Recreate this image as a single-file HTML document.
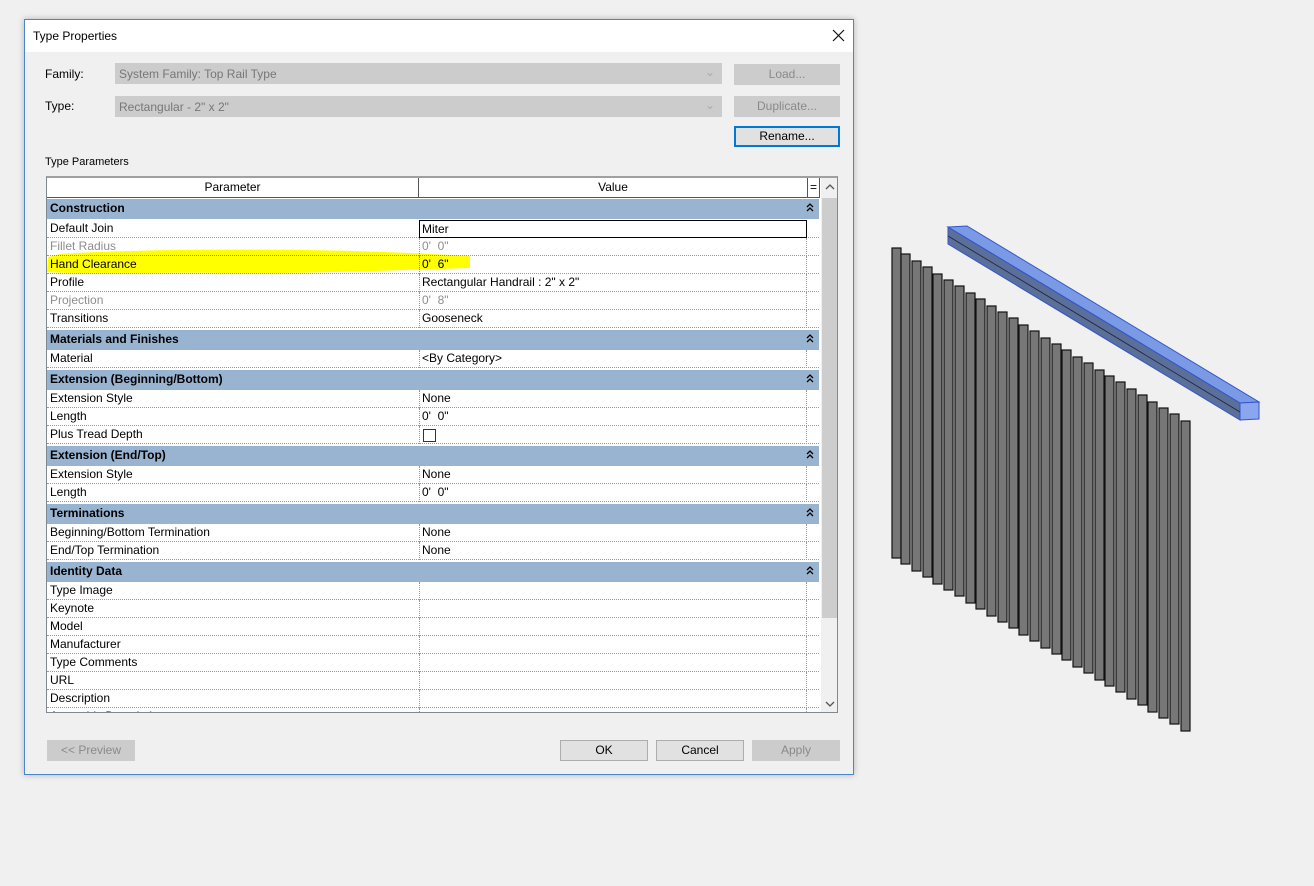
<!DOCTYPE html>
<html><head><meta charset="utf-8">
<style>
*{box-sizing:border-box;margin:0;padding:0}
body{width:1314px;height:886px;background:#f0f0f0;position:relative;overflow:hidden;font-family:"Liberation Sans",sans-serif;font-size:12px;color:#000}
.dlg{position:absolute;left:24px;top:19px;width:830px;height:756px;background:#f0f0f0;border:1px solid #4a86c8;box-shadow:0 0 6px rgba(0,0,0,.25)}
.title{position:absolute;left:0;top:0;width:828px;height:32px;background:#fff}
.abs{position:absolute}
.combo{position:absolute;background:#ccc;border:1px solid #ccc;color:#777;padding:3px 0 0 3px;height:21px}
.btn{position:absolute;background:#cccccc;border:1px solid #cccccc;color:#8a8a8a;text-align:center;line-height:19px;height:21px}
.btn.on{background:#e1e1e1;border:1px solid #adadad;color:#000}
.tbl{position:absolute;left:46px;top:176px;width:792px;height:537px;border:1px solid #828790;border-top:2px solid #a0a0a0;background:#fff;overflow:hidden}
.row{position:absolute;left:0;width:772px;height:18px;border-bottom:1px dotted #999;background:#fff}
.row .p{position:absolute;left:3px;top:1px}
.row .v{position:absolute;left:372px;top:0;width:388px;height:18px;border-left:1px dotted #999;border-right:1px dotted #999;padding:1px 0 0 2px}
.grp{position:absolute;left:0;width:772px;height:20px;background:#99b4d1;font-weight:bold;padding:2px 0 0 3px}
.grp .c{position:absolute;right:5px;top:3px}
.g{color:#8d8d8d}
</style></head><body>
<div class="dlg">
 <div class="title"><span class="abs" style="left:8px;top:9px">Type Properties</span>
  <svg class="abs" style="left:807px;top:9px" width="14" height="14"><path d="M1 1L12 12M12 1L1 12" stroke="#111" stroke-width="1.2"/></svg></div>
 <span class="abs" style="left:20px;top:47px">Family:</span>
 <span class="abs" style="left:20px;top:79px">Type:</span>
 <div class="combo" style="left:90px;top:43px;width:607px">System Family: Top Rail Type<span class="abs" style="right:6px;top:1px;color:#aaa">&#8964;</span></div>
 <div class="combo" style="left:90px;top:76px;width:607px">Rectangular - 2" x 2"<span class="abs" style="right:6px;top:1px;color:#aaa">&#8964;</span></div>
 <div class="btn" style="left:709px;top:44px;width:106px">Load...</div>
 <div class="btn" style="left:709px;top:76px;width:106px">Duplicate...</div>
 <div class="btn on" style="left:709px;top:106px;width:106px;border:2px solid #0078d7;line-height:17px">Rename...</div>
 <span class="abs" style="left:20px;top:136px;font-size:11px">Type Parameters</span>
 <div class="btn" style="left:22px;top:720px;width:88px">&lt;&lt; Preview</div>
 <div class="btn on" style="left:535px;top:720px;width:88px">OK</div>
 <div class="btn on" style="left:631px;top:720px;width:88px">Cancel</div>
 <div class="btn" style="left:727px;top:720px;width:88px">Apply</div>
</div>

<div class="tbl">
 <div class="abs" style="left:0;top:0;width:372px;height:20px;border-right:1px solid #555;border-bottom:1px solid #555;text-align:center;line-height:19px;background:#fff">Parameter</div>
 <div class="abs" style="left:372px;top:0;width:389px;height:20px;border-right:1px solid #555;border-bottom:1px solid #555;text-align:center;line-height:19px;background:#fff">Value</div>
 <div class="abs" style="left:761px;top:0;width:12px;height:20px;border-bottom:1px solid #555;border-right:1px solid #555;text-align:center;line-height:19px">=</div>
 <div class="abs" style="left:774px;top:0;width:17px;height:537px;background:#f0f0f0"></div>
 <div class="abs" style="left:775px;top:20px;width:15px;height:420px;background:#cdcdcd"></div>
 <svg class="abs" style="left:778px;top:5px" width="10" height="8"><path d="M1 6L5 2L9 6" stroke="#555" fill="none" stroke-width="1.3"/></svg>
 <svg class="abs" style="left:778px;top:522px" width="10" height="8"><path d="M1 2L5 6L9 2" stroke="#555" fill="none" stroke-width="1.3"/></svg>

 <div class="grp" style="top:21px">Construction<svg class="c" width="8" height="11"><path d="M1 5L4 2L7 5M1 9L4 6L7 9" stroke="#000" fill="none" stroke-width="1.3"/></svg></div>
 <div class="row" style="top:42px"><span class="p">Default Join</span><div class="v" style="border:1px solid #000;border-right:1px solid #000">Miter</div></div>
 <div class="row g" style="top:60px"><span class="p">Fillet Radius</span><div class="v">0'&nbsp; 0"</div></div>
 <div class="row" style="top:78px"><span class="p">Hand Clearance</span><div class="v">0'&nbsp; 6"</div></div>
 <div class="row" style="top:96px"><span class="p">Profile</span><div class="v">Rectangular Handrail : 2" x 2"</div></div>
 <div class="row g" style="top:114px"><span class="p">Projection</span><div class="v">0'&nbsp; 8"</div></div>
 <div class="row" style="top:132px"><span class="p">Transitions</span><div class="v">Gooseneck</div></div>
 <div class="grp" style="top:152px">Materials and Finishes<svg class="c" width="8" height="11"><path d="M1 5L4 2L7 5M1 9L4 6L7 9" stroke="#000" fill="none" stroke-width="1.3"/></svg></div>
 <div class="row" style="top:172px"><span class="p">Material</span><div class="v">&lt;By Category&gt;</div></div>
 <div class="grp" style="top:192px">Extension (Beginning/Bottom)<svg class="c" width="8" height="11"><path d="M1 5L4 2L7 5M1 9L4 6L7 9" stroke="#000" fill="none" stroke-width="1.3"/></svg></div>
 <div class="row" style="top:212px"><span class="p">Extension Style</span><div class="v">None</div></div>
 <div class="row" style="top:230px"><span class="p">Length</span><div class="v">0'&nbsp; 0"</div></div>
 <div class="row" style="top:248px"><span class="p">Plus Tread Depth</span><div class="v"><span style="display:inline-block;width:13px;height:13px;border:1px solid #333;margin:2px 0 0 1px"></span></div></div>
 <div class="grp" style="top:268px">Extension (End/Top)<svg class="c" width="8" height="11"><path d="M1 5L4 2L7 5M1 9L4 6L7 9" stroke="#000" fill="none" stroke-width="1.3"/></svg></div>
 <div class="row" style="top:288px"><span class="p">Extension Style</span><div class="v">None</div></div>
 <div class="row" style="top:306px"><span class="p">Length</span><div class="v">0'&nbsp; 0"</div></div>
 <div class="grp" style="top:326px">Terminations<svg class="c" width="8" height="11"><path d="M1 5L4 2L7 5M1 9L4 6L7 9" stroke="#000" fill="none" stroke-width="1.3"/></svg></div>
 <div class="row" style="top:346px"><span class="p">Beginning/Bottom Termination</span><div class="v">None</div></div>
 <div class="row" style="top:364px"><span class="p">End/Top Termination</span><div class="v">None</div></div>
 <div class="grp" style="top:384px">Identity Data<svg class="c" width="8" height="11"><path d="M1 5L4 2L7 5M1 9L4 6L7 9" stroke="#000" fill="none" stroke-width="1.3"/></svg></div>
 <div class="row" style="top:404px"><span class="p">Type Image</span><div class="v"></div></div>
 <div class="row" style="top:422px"><span class="p">Keynote</span><div class="v"></div></div>
 <div class="row" style="top:440px"><span class="p">Model</span><div class="v"></div></div>
 <div class="row" style="top:458px"><span class="p">Manufacturer</span><div class="v"></div></div>
 <div class="row" style="top:476px"><span class="p">Type Comments</span><div class="v"></div></div>
 <div class="row" style="top:494px"><span class="p">URL</span><div class="v"></div></div>
 <div class="row" style="top:512px"><span class="p">Description</span><div class="v"></div></div>
 <div class="row" style="top:530px"><span class="p">Assembly Description</span><div class="v"></div></div>
</div>

<svg class="abs" style="left:0;top:0;mix-blend-mode:multiply" width="1314" height="886">
 <path d="M60 254 C120 250 220 249 300 250 C380 251 430 254 470 256 L470 268 C400 270 300 274 220 273 C150 272 90 275 47 272 L48 257 Z" fill="#ffff00"/>
</svg>

<svg class="abs" style="left:0;top:0" width="1314" height="886">
 <g stroke="#111" stroke-width="1.2">
 <g fill="#777">
  <rect x="892" y="248" width="9" height="310"/><rect x="901" y="254" width="9" height="310"/><rect x="912" y="261" width="9" height="310"/><rect x="923" y="267" width="9" height="310"/><rect x="933" y="274" width="9" height="310"/><rect x="944" y="280" width="9" height="310"/><rect x="955" y="286" width="9" height="310"/><rect x="966" y="293" width="9" height="310"/><rect x="976" y="299" width="9" height="310"/><rect x="987" y="306" width="9" height="310"/><rect x="998" y="312" width="9" height="310"/><rect x="1009" y="318" width="9" height="310"/><rect x="1019" y="325" width="9" height="310"/><rect x="1030" y="331" width="9" height="310"/><rect x="1041" y="338" width="9" height="310"/><rect x="1052" y="344" width="9" height="310"/><rect x="1062" y="350" width="9" height="310"/><rect x="1073" y="357" width="9" height="310"/><rect x="1084" y="363" width="9" height="310"/><rect x="1095" y="370" width="9" height="310"/><rect x="1105" y="376" width="9" height="310"/><rect x="1116" y="382" width="9" height="310"/><rect x="1127" y="389" width="9" height="310"/><rect x="1138" y="395" width="9" height="310"/><rect x="1148" y="402" width="9" height="310"/><rect x="1159" y="408" width="9" height="310"/><rect x="1170" y="414" width="9" height="310"/><rect x="1181" y="421" width="9" height="310"/>
 </g></g>
 <polygon points="948,227 967,226 1259,402 1240,403" fill="#7b9ae6" stroke="#3355cc" stroke-width="1"/>
 <polygon points="948,227 1240,403 1240,420 948,244" fill="#5a6f9a" stroke="#3355cc" stroke-width="1"/>
 <polygon points="1240,403 1259,402 1259,419 1240,420" fill="#8aa6ee" stroke="#3355cc" stroke-width="1"/>
 <line x1="948" y1="236" x2="1240" y2="412" stroke="#223" stroke-width="0.8"/>
</svg>
</body></html>
